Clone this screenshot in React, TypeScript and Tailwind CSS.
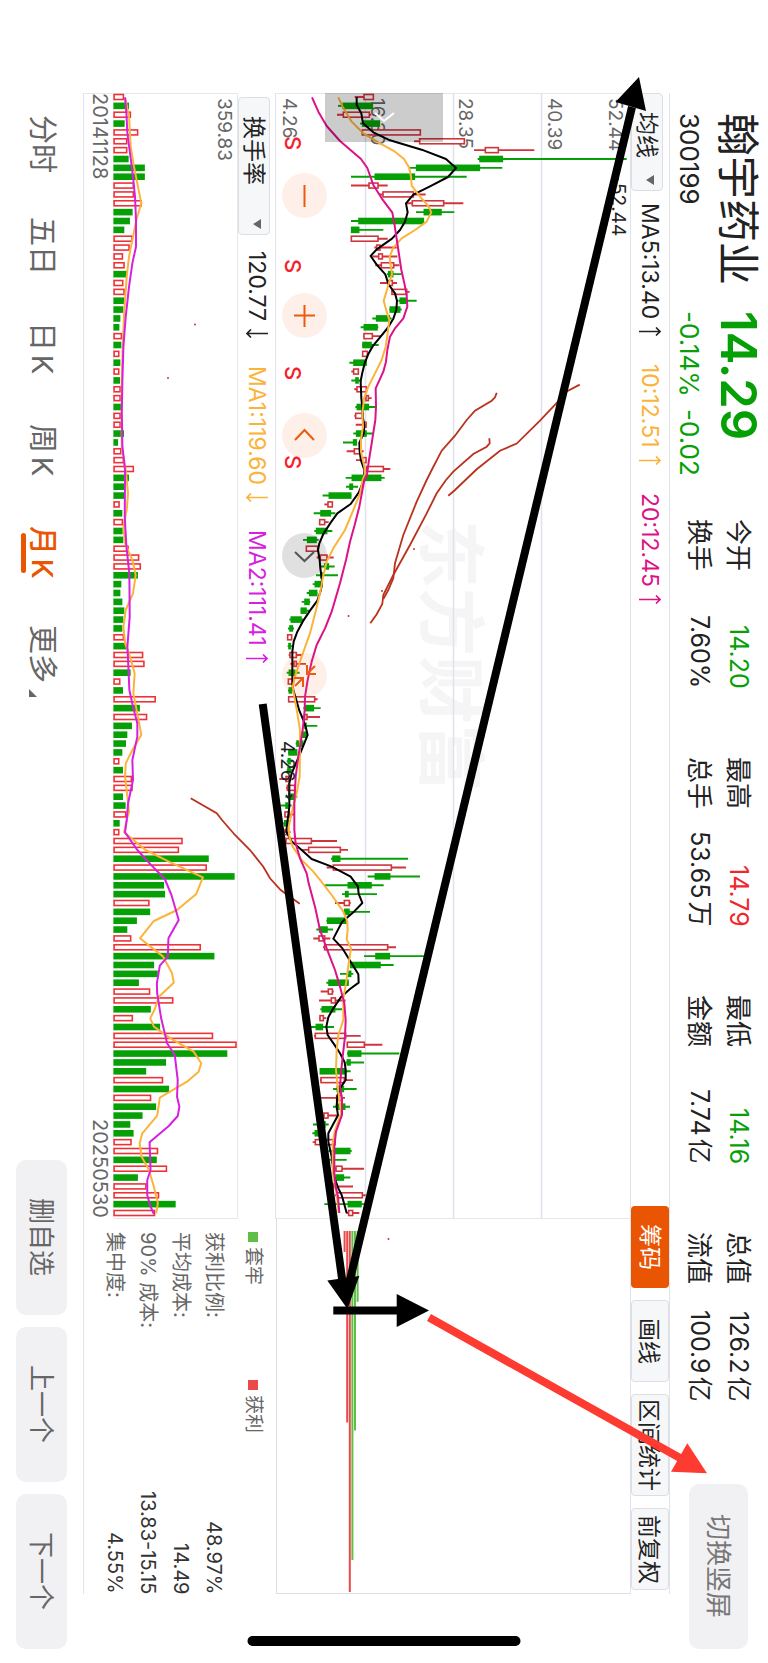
import type { ReactNode } from 'react'

// [low, bodyLow, bodyHigh, high, up]
const candles: number[][] = [
  [284, 312, 340, 340, 1], [234, 250, 337, 337, 0], [231, 250, 328, 334, 1], [300, 308, 358, 358, 0],
  [305, 307, 481, 481, 1], [462, 479, 613, 613, 1], [642, 676, 715, 823, 1], [653, 660, 727, 1100, 0],
  [447, 470, 658, 727, 0], [273, 346, 463, 620, 0], [273, 327, 354, 383, 1], [358, 369, 460, 497, 1],
  [440, 457, 551, 610, 1], [468, 493, 543, 583, 0], [273, 297, 490, 492, 0], [273, 275, 296, 370, 0],
  [273, 274, 354, 383, 1], [343, 350, 360, 410, 1], [337, 356, 367, 412, 1], [346, 364, 401, 418, 1],
  [381, 386, 398, 425, 0], [360, 386, 397, 411, 1], [393, 396, 440, 449, 1], [415, 421, 437, 470, 0],
  [388, 391, 419, 425, 0], [337, 350, 388, 395, 0], [302, 313, 351, 355, 0], [311, 312, 337, 363, 1],
  [307, 309, 333, 356, 0], [307, 308, 322, 322, 1], [268, 282, 318, 320, 0], [274, 281, 295, 297, 1],
  [274, 288, 294, 305, 0], [283, 291, 319, 322, 1], [313, 318, 325, 335, 1], [286, 292, 325, 349, 0],
  [283, 287, 308, 310, 1], [287, 312, 318, 320, 1], [280, 290, 318, 340, 0], [249, 281, 289, 291, 0],
  [260, 283, 300, 311, 1], [288, 306, 318, 320, 1], [318, 320, 370, 391, 1], [257, 277, 362, 374, 0],
  [258, 270, 277, 294, 0], [188, 208, 272, 274, 0], [193, 204, 217, 217, 1], [161, 183, 211, 226, 0],
  [178, 179, 194, 206, 1], [163, 170, 200, 217, 0], [129, 143, 168, 176, 0], [138, 139, 173, 175, 1],
  [170, 181, 201, 221, 1], [180, 195, 205, 224, 0], [168, 183, 186, 234, 0], [158, 166, 186, 188, 0],
  [140, 149, 170, 172, 0], [125, 135, 147, 151, 0], [122, 124, 138, 148, 0], [88, 94, 123, 130, 0],
  [84, 90, 97, 102, 0], [82, 83, 95, 95, 1], [83, 87, 91, 97, 0], [86, 90, 109, 128, 1],
  [91, 102, 109, 138, 1], [80, 88, 104, 119, 0], [84, 85, 97, 98, 1], [84, 88, 94, 96, 0],
  [84, 86, 164, 173, 1], [130, 136, 160, 182, 0], [130, 134, 141, 180, 1], [130, 135, 138, 172, 0],
  [122, 127, 138, 140, 0], [107, 111, 128, 130, 0], [84, 87, 110, 111, 0], [80, 85, 90, 97, 0],
  [80, 84, 90, 97, 0], [58, 78, 86, 88, 1], [78, 82, 104, 104, 1], [76, 90, 102, 112, 0],
  [62, 78, 82, 95, 0], [73, 75, 88, 103, 1], [70, 74, 84, 86, 0], [70, 75, 80, 92, 1],
  [76, 78, 154, 231, 1], [127, 146, 241, 264, 1], [213, 219, 239, 444, 0], [200, 220, 394, 438, 1],
  [323, 346, 389, 480, 0], [195, 265, 333, 371, 0], [246, 257, 264, 351, 0], [225, 253, 268, 272, 1],
  [250, 254, 267, 330, 0], [199, 203, 258, 260, 0], [169, 179, 201, 219, 0], [160, 177, 194, 211, 1],
  [189, 194, 383, 408, 1], [312, 348, 388, 493, 0], [270, 272, 360, 401, 0], [240, 264, 272, 280, 0],
  [199, 207, 264, 266, 0], [182, 205, 217, 221, 1], [177, 214, 226, 257, 1], [181, 187, 224, 246, 0],
  [178, 180, 190, 199, 1], [152, 169, 187, 222, 0], [162, 166, 257, 302, 1], [260, 262, 313, 367, 1],
  [261, 265, 302, 418, 0], [258, 262, 270, 312, 0], [180, 181, 256, 272, 0], [180, 183, 253, 279, 1],
  [219, 232, 250, 290, 0], [180, 230, 245, 255, 1], [219, 230, 254, 270, 0], [190, 192, 204, 232, 1],
  [159, 175, 195, 206, 0], [157, 166, 175, 190, 0], [158, 166, 225, 228, 1], [205, 226, 269, 275, 0],
  [190, 215, 220, 260, 0], [225, 228, 246, 312, 1], [222, 228, 250, 271, 0], [210, 215, 220, 279, 1],
  [225, 230, 307, 317, 1], [193, 265, 303, 315, 0], [258, 266, 278, 298, 1],
]

// negative = falling month
const volumes = [
  160, -176, 181, -163, 203, 170, 170, -175, -224, -224, 190, 190, 214, -187, -179, -162, 186, 177, 157, 162,
  -170, 158, 162, -162, -159, -150, -147, 154, -153, 146, -150, 146, -149, 150, 150, -156, 150, 150, -161, -143,
  152, 160, 190, -176, -163, -162, 147, -156, 157, -157, -159, 174, 206, 211, -203, -153, -150, -156, -162, -159,
  -156, 160, -168, 218, 222, -181, 149, -158, 256, -209, 230, -185, -171, -167, -156, 146, -158, 184, 186, -158,
  -166, 167, -148, 146, 337, 326, -417, 410, -495, -282, -285, 237, -240, -200, -171, 182, 392, -434, -252, -263,
  -206, 239, 309, -242, 187, -270, 429, 500, -473, -288, -228, 278, -297, 242, -258, -217, -180, -190, 183, 263,
  -260, 290, -203, 228, 266, -317, 254,
]

const ma5 =
  '290,52 290,75 304,100 309,130 340,157 390,181 485,209 558,237 588,264 564,291 510,319 460,344 438,370 443,397 435,425 420,450 396,476 350,508 332,528 350,554 376,583 385,612 405,640 411,662 409,690 400,716 383,744 360,772 340,796 325,822 314,850 307,878 302,903 303,930 304,955 307,982 308,1010 313,1035 311,1061 298,1088 299,1115 303,1141 313,1170 312,1200 296,1238 272,1272 232,1300 212,1328 190,1362 178,1390 174,1410 179,1440 181,1465 186,1500 183,1530 172,1562 150,1592 128,1625 112,1655 101,1685 97,1715 97,1770 97,1810 100,1830 109,1860 118,1892 130,1920 137,1940 143,1965 124,2012 110,2045 95,2080 88,2110 88,2180 83,2220 79,2255 94,2283 125,2310 155,2337 215,2360 272,2390 294,2420 296,2442 307,2469 280,2497 246,2526 220,2576 248,2606 272,2645 295,2683 296,2708 270,2727 244,2750 220,2785 205,2812 199,2840 203,2865 225,2897 240,2920 254,2947 257,2970 257,3000 240,3025 232,3050 230,3080 234,3106 205,3160 205,3185 215,3230 222,3290 235,3325 245,3345 252,3370 260,3399'
const ma10 =
  '235,52 248,80 275,125 310,160 360,190 405,215 432,237 447,262 453,290 455,317 480,350 505,378 514,397 500,425 465,450 425,475 400,503 389,530 392,556 396,583 388,605 371,662 380,695 388,720 383,760 377,800 365,840 345,880 325,920 312,955 307,1000 309,1040 303,1080 303,1115 313,1160 315,1180 308,1200 300,1240 278,1295 255,1350 220,1405 200,1445 189,1490 182,1530 168,1590 150,1660 125,1730 105,1790 98,1820 103,1850 112,1900 120,1950 120,2000 119,2090 110,2140 97,2190 86,2240 88,2270 98,2300 125,2340 160,2375 180,2400 215,2445 250,2495 262,2525 263,2550 260,2578 273,2605 266,2650 258,2710 250,2755 250,2820 235,2865 230,2910 228,2970 232,3010 238,3060 243,3100 224,3155 218,3190 218,3280 230,3340 236,3399'
const ma20 =
  '156,52 175,95 200,138 240,183 303,237 322,264 340,315 365,355 397,398 403,430 409,470 415,510 424,570 432,605 440,645 442,680 430,715 405,745 390,770 382,810 378,845 370,875 347,925 348,980 346,1020 335,1090 327,1140 320,1190 313,1200 298,1280 284,1335 270,1385 258,1440 240,1510 215,1595 195,1645 170,1695 155,1745 143,1800 135,1850 134,1890 128,1950 115,2030 107,2090 103,2170 103,2250 107,2290 120,2335 140,2380 146,2410 165,2480 180,2550 200,2605 225,2670 240,2720 253,2770 257,2820 255,2870 248,2930 243,2980 240,3020 246,3060 246,3105 228,3155 223,3200 223,3280 227,3320 234,3350 238,3399'
const vma1 =
  '163,52 175,110 180,200 190,260 212,370 197,420 187,470 175,530 168,590 160,700 156,800 153,900 153,1000 153,1100 165,1170 172,1240 168,1290 158,1340 163,1390 185,1440 195,1485 187,1540 165,1590 158,1640 163,1690 178,1730 192,1780 188,1840 200,1900 212,1965 185,2010 165,2050 163,2090 170,2150 175,2195 168,2220 160,2257 225,2310 300,2347 398,2392 378,2442 320,2490 250,2523 208,2575 278,2630 305,2680 310,2708 265,2750 253,2787 239,2815 250,2840 300,2875 370,2915 393,2950 385,2975 350,3005 268,3053 260,3107 215,3160 207,3190 213,3230 235,3270 250,3320 262,3370 257,3400'
const vma2 =
  '163,52 167,100 170,160 178,220 187,290 193,350 196,420 196,500 185,550 175,620 165,710 158,800 155,900 153,1000 155,1100 163,1170 162,1310 167,1400 176,1480 177,1610 170,1700 173,1760 176,1830 187,1880 200,1930 200,1970 185,2040 187,2100 172,2170 168,2220 163,2257 200,2310 240,2353 283,2397 303,2445 325,2520 294,2575 292,2630 268,2657 259,2710 260,2740 272,2815 290,2890 313,2925 322,3000 320,3050 327,3080 322,3108 295,3138 237,3187 240,3270 230,3300 230,3345 240,3380 250,3402'

const UP = '#d0353d'
const DOWN = '#06a006'
const rowY = (i: number) => 97 + (i * 1116) / 126

const stats = [
  { label: '今开', value: '14.20', color: 'text-[#06a006]' },
  { label: '最高', value: '14.79', color: 'text-[#f0282d]' },
  { label: '最低', value: '14.16', color: 'text-[#06a006]' },
  { label: '总值', value: '126.2亿', color: 'text-[#222222]' },
  { label: '换手', value: '7.60%', color: 'text-[#222222]' },
  { label: '总手', value: '53.65万', color: 'text-[#222222]' },
  { label: '金额', value: '7.74亿', color: 'text-[#222222]' },
  { label: '流值', value: '100.9亿', color: 'text-[#222222]' },
]

const costs = [
  { label: '获利比例:', value: '48.97%' },
  { label: '平均成本:', value: '14.49' },
  { label: '90% 成本:', value: '13.83-15.15' },
  { label: '集中度:', value: '4.55%' },
]

const tabs = ['分时', '五日', '日K', '周K', '月K', '更多']

function SideText({ x, y, size = 19, fill = '#666666', weight = 400, children }: {
  x: number
  y: number
  size?: number
  fill?: string
  weight?: number
  children: ReactNode
}) {
  return (
    <text transform={`translate(${x} ${y}) rotate(90)`} fontSize={size} fill={fill} fontWeight={weight}>
      {children}
    </text>
  )
}

function Picker({ name, value, size }: { name: string; value: string; size: string }) {
  return (
    <div className={`relative w-[32px] shrink-0 ${size}`}>
      <select
        aria-label={name}
        className="h-full w-full appearance-none rounded-[4px] border border-[#dcdee3] bg-[#f6f7f9] ps-[18px] text-[23px] leading-[30px] text-[#222222] [text-orientation:sideways] [writing-mode:vertical-rl]"
      >
        <option>{value}</option>
      </select>
      <svg viewBox="0 0 8 10" className="pointer-events-none absolute bottom-[6px] left-[12px] h-[10px] w-[8px]">
        <path d="M0 5 8 0V10Z" fill="#666666" />
      </svg>
    </div>
  )
}

function Reading({ text, rising, color }: { text: string; rising: boolean; color: string }) {
  return (
    <span className={`flex items-center gap-[8px] ${color}`}>
      {text}
      <svg viewBox="0 0 22 9" className="h-[9px] w-[22px]" fill="none" stroke="currentColor" strokeWidth="1.6">
        <path d={rising ? 'M0 4.500H21M17 .500 21 4.500 17 8.500' : 'M22 4.500H1M5 .500 1 4.500 5 8.500'} />
      </svg>
    </span>
  )
}

function PriceChart() {
  const x = (v: number) => 260 + v / 3
  return (
    <svg viewBox="276 93 354 1126" preserveAspectRatio="none" className="block h-full w-full [writing-mode:horizontal-tb]">
      <SideText x={426} y={520} size={68} fill="#f5f5f6" weight={700}>东方财富</SideText>
      <path d="M365.5 93V1218M453.5 93V1218M541.5 93V1218" stroke="#dfe2ea" strokeWidth="1.5" />
      <path d="M276 93.5H630M276 1218.5H630" stroke="#e6e7ea" />
      <SideText x={283} y={98}>4.26</SideText>
      <SideText x={371} y={98}>16.30</SideText>
      <SideText x={459} y={98}>28.35</SideText>
      <SideText x={548} y={98}>40.39</SideText>
      <SideText x={609} y={98}>52.44</SideText>
      {candles.map(([low, a, b, high, up], i) => {
        const y = rowY(i)
        const color = up ? UP : DOWN
        return (
          <g key={i} stroke={color} strokeWidth="1.9">
            <path d={`M${x(low)} ${y}H${x(a)}M${x(b)} ${y}H${x(high)}`} />
            <rect x={x(a)} y={y - 2.5} width={(b - a) / 3} height="5" fill={up ? '#ffffff' : color} strokeWidth="1.6" />
          </g>
        )
      })}
      <g transform="translate(260 80) scale(.33333)" fill="none" strokeWidth="6" strokeLinejoin="round">
        <polyline points={ma5} stroke="#000000" />
        <polyline points={ma10} stroke="#fbb33a" />
        <polyline points={ma20} stroke="#dc1288" />
      </g>
      <SideText x={281} y={741} fill="#222222">4.26</SideText>
      <path d="M289 783V799M286 795 289 799 292 795" fill="none" stroke="#222222" strokeWidth="1.5" />
      <SideText x={612} y={183} fill="#222222">52.44</SideText>
      <path d="M618 166V180" stroke="#222222" strokeWidth="1.5" />
      {[136, 259, 366, 455].map((y) => (
        <SideText key={y} x={285} y={y} size={22} fill="#f5222d" weight={500}>S</SideText>
      ))}
    </svg>
  )
}

function ChipChart() {
  const bars = [
    [343.6, 1252, 0], [346.2, 1423, 0], [348.8, 1593, 0], [351.4, 1561, 1], [354, 1431, 1], [356.6, 1302, 1],
  ]
  return (
    <svg viewBox="277 1219 353 375" preserveAspectRatio="none" className="block h-full w-full">
      {bars.map(([x, end, held]) => (
        <rect key={x} x={x} y="1231" width="2" height={end - 1231} fill={held ? '#5fbe45' : '#ea4a4a'} />
      ))}
    </svg>
  )
}

function VolumeChart() {
  return (
    <svg viewBox="83 93 155 1126" preserveAspectRatio="none" className="block min-h-0 w-[155px] flex-1 [writing-mode:horizontal-tb]">
      <path d="M83 93.5H237.5V1218.5H113" fill="none" stroke="#e6e7ea" />
      <path d="M112.5 93V1218" stroke="#eeeeee" />
      {volumes.map((v, i) => {
        const w = (Math.abs(v) - 129) / 3
        return v > 0 ? (
          <rect key={i} x="113.3" y={rowY(i) - 2.5} width={w - 1} height="5" fill="#ffffff" stroke="#ee3338" strokeWidth="1.6" />
        ) : (
          <rect key={i} x="112.6" y={rowY(i) - 3.3} width={w} height="6.6" fill={DOWN} />
        )
      })}
      <g transform="translate(70 80) scale(.33333)" fill="none" strokeWidth="6" strokeLinejoin="round">
        <polyline points={vma1} stroke="#fbb33a" />
        <polyline points={vma2} stroke="#d61fe0" />
      </g>
      <SideText x={218} y={98}>359.83</SideText>
      <SideText x={92} y={93} size={20}>20141128</SideText>
      <SideText x={92} y={1119} size={20}>20250530</SideText>
    </svg>
  )
}

function Drawings() {
  return (
    <svg viewBox="0 0 768 1663" preserveAspectRatio="none" className="pointer-events-none absolute inset-0 h-full w-full">
      <g fill="none" stroke="#b9321d" strokeWidth="1.8">
        <path d="M496.700 392.700 495 397.300 491.700 400.700 475 410.700 466.700 420 455 435.700 441.700 450.700 431.700 470 426.700 480 416.700 501.700 403.300 535 395 563.300 393.300 578.300 388.300 590 383.300 599" />
        <path d="M489.300 438.300 489.700 443.300 486.700 446.700 473.300 454 453.300 471.700 446 480 436.700 493.300 426.700 513.300 410 545 393.300 575 383.300 595 382.300 604 376.700 614.300 370.300 623.300" />
        <path d="M579.700 384.600 566.700 391.500 561.700 397.600 540 420.600 516.700 443.600 500 450.700 476.700 469.300 455 490 448.300 495.700" />
        <path d="M190.700 798.300 216.700 813.300 222 820 235 835 250 850 263.300 866.700 270 878.300 280.700 890 299.700 903.700" />
      </g>
      <g fill="#c8372b">
        <circle cx="414" cy="549" r="1" />
        <circle cx="382" cy="591" r="1" />
        <circle cx="348.500" cy="616" r="1" />
        <circle cx="195" cy="324.500" r="1" />
        <circle cx="168" cy="378" r="1" />
        <circle cx="388.500" cy="1239" r="1" />
      </g>
      <g stroke="#000000" strokeWidth="8">
        <path d="M347.500 1290 632 107" />
        <path d="M262.700 704 342.500 1282" />
        <path d="M333.300 1310.500H398" />
      </g>
      <path d="M639 77 615.500 102 646 111ZM327.300 1280.500 359.300 1276 347.500 1309ZM396.700 1294V1327L429 1310.600Z" />
      <path d="M429 1317.500 680 1458" stroke="#fd3b30" strokeWidth="8" />
      <path d="M687.300 1443.300 671 1471.700 707 1473.300Z" fill="#fd3b30" />
    </svg>
  )
}

function ToolButton({ label, tone, d }: { label: string; tone: string; d: string }) {
  return (
    <button type="button" aria-label={label} className={`h-[45px] w-[45px] rounded-full ${tone}`}>
      <svg viewBox="0 0 45 45" className="h-full w-full" fill="none" stroke="currentColor" strokeWidth="2">
        <path d={d} />
      </svg>
    </button>
  )
}

export default function App() {
  return (
    <main className="relative flex h-screen w-full flex-col overflow-hidden bg-white font-[Inter,'Noto_Sans_CJK_SC',sans-serif] text-[#222222] [text-autospace:normal] [text-orientation:sideways] [writing-mode:vertical-rl]">
      <header className="flex w-[98px] shrink-0 items-center ps-[113px] pe-[14px]">
        <div className="h-[198px] w-[98px] shrink-0">
          <h1 className="text-[43px] leading-[60px] whitespace-nowrap">翰宇药业</h1>
          <p className="text-[26px] leading-[38px]">300199</p>
        </div>
        <div className="h-[208px] w-[98px] shrink-0 text-[#06a006]">
          <p className="text-[49px] leading-[60px] font-semibold">14.29</p>
          <p className="flex gap-[12px] text-[26px] leading-[38px]">
            <span>-0.14%</span>
            <span>-0.02</span>
          </p>
        </div>
        <dl className="me-[82px] grid flex-1 grid-cols-4 gap-x-[68px] leading-[39px]">
          {stats.map((s) => (
            <div key={s.label} className="flex justify-between whitespace-nowrap">
              <dt className="text-[26px]">{s.label}</dt>
              <dd className={`text-[25px] ${s.color}`}>{s.value}</dd>
            </div>
          ))}
        </dl>
        <button type="button" className="mr-[20px] h-[165px] w-[59px] shrink-0 self-start rounded-[10px] bg-[#f1f1f3] text-[26px] text-[#777777]">
          切换竖屏
        </button>
      </header>

      <section className="ms-[93px] me-[69px] flex flex-col">
        <div className="flex w-[40px] items-center border-r border-l border-[#e1e3e8] text-[23px] leading-[38px]">
          <Picker name="主图指标" value="均线" size="h-[98px]" />
          <p className="ms-[12px] flex flex-1 gap-[28px] whitespace-nowrap">
            <Reading text="MA5:13.40" rising color="text-[#222222]" />
            <Reading text="10:12.51" rising color="text-[#fbb33a]" />
            <Reading text="20:12.45" rising color="text-[#dc1288]" />
          </p>
          <div className="me-[4px] flex gap-[12px] whitespace-nowrap">
            <button type="button" className="h-[82px] w-[38px] rounded-[4px] bg-[#ea5504] text-white">筹码</button>
            <button type="button" className="h-[82px] w-[38px] rounded-[4px] border border-[#dcdee3] bg-[#f6f7f9]">画线</button>
            <button type="button" className="h-[102px] w-[38px] rounded-[4px] border border-[#dcdee3] bg-[#f6f7f9]">区间统计</button>
            <button type="button" className="h-[82px] w-[38px] rounded-[4px] border border-[#dcdee3] bg-[#f6f7f9]">前复权</button>
          </div>
        </div>

        <div className="flex w-[354px]">
          <div className="relative min-h-0 w-[354px] flex-1">
            <PriceChart />
            <button type="button" aria-label="展开" className="absolute top-0 left-[49px] h-[49px] w-[118px] bg-black/20 text-white">
              <svg viewBox="0 0 118 49" className="h-full w-full" fill="none" stroke="currentColor" strokeWidth="2">
                <path d="M50 20 59 28 69 20" />
              </svg>
            </button>
            <div className="absolute top-[80px] left-[6px] flex gap-[75px]">
              <ToolButton label="缩小" tone="bg-[#f26a21]/10 text-[#ea5b10]" d="M22.500 12V34" />
              <ToolButton label="放大" tone="bg-[#f26a21]/10 text-[#ea5b10]" d="M22.500 12V34M12 22.500H33" />
              <ToolButton label="左移" tone="bg-[#f26a21]/10 text-[#ea5b10]" d="M13 27 22.500 17 32 27" />
              <ToolButton label="右移" tone="bg-black/12 text-[#555555]" d="M13 19 22.500 28 32 19" />
              <ToolButton label="收起" tone="bg-[#f26a21]/10 text-[#ea5b10]" d="M25 12V21H34M25 21 33 13M12 25H21V34M21 25 13 33" />
            </div>
          </div>
          <div className="h-[375px] w-[354px] shrink-0 border-b border-l border-[#dedfe3]">
            <ChipChart />
          </div>
        </div>

        <div className="flex w-[193px] border-l border-[#e1e3e8]">
          <div className="flex min-h-0 flex-1 flex-col">
            <div className="flex w-[38px] items-center border-r border-[#e1e3e8] pt-[4px] text-[23px] leading-[38px] whitespace-nowrap">
              <Picker name="副图指标" value="换手率" size="h-[138px]" />
              <p className="ms-[16px] flex gap-[28px]">
                <Reading text="120.77" rising={false} color="text-[#222222]" />
                <Reading text="MA1:119.60" rising={false} color="text-[#fbb33a]" />
                <Reading text="MA2:111.41" rising color="text-[#d61fe0]" />
              </p>
            </div>
            <VolumeChart />
          </div>
          <div className="h-[375px] shrink-0 ps-[13px] text-[19px] text-[#666666]">
            <div className="flex w-[46px] items-center">
              <p className="flex h-[148px] items-center gap-[5px]">
                <i className="h-[10px] w-[10px] bg-[#5fbe45]" />
                套牢
              </p>
              <p className="flex items-center gap-[5px]">
                <i className="h-[10px] w-[10px] bg-[#ea4a4a]" />
                获利
              </p>
            </div>
            <dl className="text-[20px] leading-[33px]">
              {costs.map((c) => (
                <div key={c.label} className="flex justify-between">
                  <dt>{c.label}</dt>
                  <dd className="text-[#333333]">{c.value}</dd>
                </div>
              ))}
            </dl>
          </div>
        </div>
      </section>

      <footer className="flex w-[83px] items-center justify-between ps-[93px] pe-[14px] text-[#666666]">
        <nav className="flex text-[29px] leading-[42px]">
          {tabs.map((t) => (
            <a
              key={t}
              href="#"
              className={`relative flex h-[102px] items-center justify-center ${t === '月K' ? 'font-medium text-[#ea5504]' : ''}`}
            >
              {t}
              {t === '月K' && <span className="absolute top-[32px] left-0 h-[40px] w-[5px] rounded-full bg-[#ea5504]" />}
              {t === '更多' && (
                <svg viewBox="0 0 8 8" className="absolute bottom-[8px] left-[8px] h-[8px] w-[8px]">
                  <path d="M0 0V8H8Z" fill="#666666" />
                </svg>
              )}
            </a>
          ))}
        </nav>
        <div className="flex gap-[12px] text-[26px]">
          <button type="button" className="h-[155px] w-[51px] rounded-[10px] bg-[#f1f1f3]">删自选</button>
          <button type="button" className="h-[155px] w-[51px] rounded-[10px] bg-[#f1f1f3]">上一个</button>
          <button type="button" className="h-[155px] w-[51px] rounded-[10px] bg-[#f1f1f3]">下一个</button>
        </div>
      </footer>

      <Drawings />
      <div className="absolute bottom-[17px] left-1/2 h-[10px] w-[273px] -translate-x-1/2 rounded-full bg-black" />
    </main>
  )
}
